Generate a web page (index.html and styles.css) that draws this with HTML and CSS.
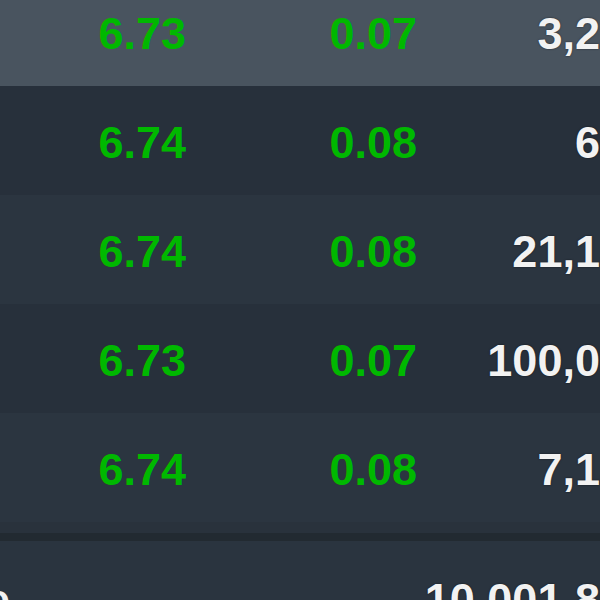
FILE: index.html
```html
<!DOCTYPE html>
<html lang="en">
<head>
  <meta charset="UTF-8" />
  <title>Quotes</title>
  <link rel="stylesheet" href="styles.css">
</head>
<body>

  <!-- tableau des cotations -->
  <table class="quotes">
    <colgroup>
      <col class="col-label">
      <col class="col-price">
      <col class="col-change">
      <col class="col-volume">
    </colgroup>
    <tbody>
      <tr class="row selected">
        <td class="label">EUR</td>
        <td class="up">6.73</td>
        <td class="up">0.07</td>
        <td class="vol">3,250</td>
      </tr>
      <tr class="row">
        <td class="label">EUR</td>
        <td class="up">6.74</td>
        <td class="up">0.08</td>
        <td class="vol">650</td>
      </tr>
      <tr class="row alt">
        <td class="label">EUR</td>
        <td class="up">6.74</td>
        <td class="up">0.08</td>
        <td class="vol">21,150</td>
      </tr>
      <tr class="row">
        <td class="label">EUR</td>
        <td class="up">6.73</td>
        <td class="up">0.07</td>
        <td class="vol">100,000</td>
      </tr>
      <tr class="row alt">
        <td class="label">EUR</td>
        <td class="up">6.74</td>
        <td class="up">0.08</td>
        <td class="vol">7,150</td>
      </tr>
      <tr class="spacer"><td colspan="4"></td></tr>
    </tbody>
    <tfoot>
      <tr class="total">
        <td class="label">Volume</td>
        <td></td>
        <td></td>
        <td class="vol">10,001,800</td>
      </tr>
    </tfoot>
  </table>

</body>
</html>
```

FILE: styles.css
```css
body {
  margin: 0;
  background: #2a343f;
  font-family: 'Liberation Sans', Arial, sans-serif;
  overflow: hidden;
}

.quotes {
  margin-left: -170px;
  margin-top: -23px;
  border-collapse: collapse;
  table-layout: fixed;
  width: 820px;
  font-size: 45px;
  font-weight: bold;
}

.col-label  { width: 180px; }
.col-price  { width: 176px; }
.col-change { width: 231px; }
.col-volume { width: 233px; }

.quotes td {
  padding: 4px 0 0 0;
  text-align: right;
  vertical-align: middle;
  white-space: nowrap;
  overflow: hidden;
}

.row {
  height: 109px;
  background: #27303b;
}

.row.alt {
  background: #2b3540;
}

.row.selected {
  background: #49545f;
}

.up {
  color: #00b800;
}

.vol {
  color: #f2f2f2;
  text-shadow: 0 0 2px rgba(0, 0, 0, 0.6);
}

.label {
  color: transparent;
}

/* bas du tableau */
.spacer {
  height: 15px;
  background: #29323c;
  border-bottom: 8px solid #222a31;
}

.spacer td {
  padding: 0;
}

.total {
  background: #2a343f;
}

.total td {
  padding-top: 33px;
  vertical-align: top;
}

.total .label {
  color: #f2f2f2;
}
```
